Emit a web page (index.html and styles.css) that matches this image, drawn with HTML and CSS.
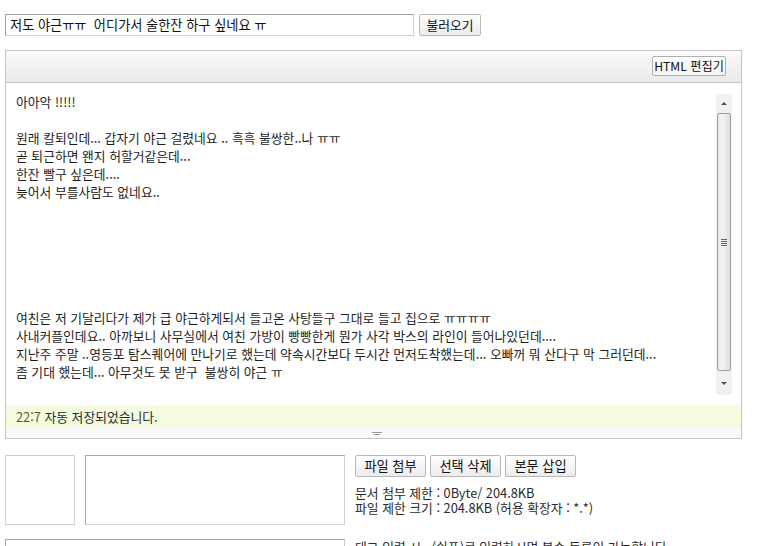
FILE: index.html
```html
<!DOCTYPE html>
<html lang="ko">
<head>
<meta charset="utf-8">
<title>글쓰기</title>
<link rel="stylesheet" href="styles.css">
</head>
<body>
<div class="page">
  <div class="title-row">
    <div class="title-input">저도 야근ㅠㅠ&nbsp; 어디가서 술한잔 하구 싶네요 ㅠ</div>
    <button class="btn btn-load">불러오기</button>
  </div>

  <div class="editor">
    <div class="toolbar">
      <button class="btn btn-html">HTML 편집기</button>
    </div>
    <div class="edit-area">
      <div class="edit-text">
        <p>아아악 !!!!!</p>
        <p>&nbsp;</p>
        <p>원래 칼퇴인데... 갑자기 야근 걸렸네요 .. 흑흑 불쌍한..나 ㅠㅠ</p>
        <p>곧 퇴근하면 왠지 허할거같은데...</p>
        <p>한잔 빨구 싶은데....</p>
        <p>늦어서 부를사람도 없네요..</p>
        <p>&nbsp;</p>
        <p>&nbsp;</p>
        <p>&nbsp;</p>
        <p>&nbsp;</p>
        <p>&nbsp;</p>
        <p>&nbsp;</p>
        <p>여친은 저 기달리다가 제가 급 야근하게되서 들고온 사탕들구 그대로 들고 집으로 ㅠㅠㅠㅠ</p>
        <p>사내커플인데요.. 아까보니 사무실에서 여친 가방이 빵빵한게 뭔가 사각 박스의 라인이 들어나있던데....</p>
        <p>지난주 주말 ..영등포 탐스퀘어에 만나기로 했는데 약속시간보다 두시간 먼저도착했는데... 오빠꺼 뭐 산다구 막 그러던데...</p>
        <p>좀 기대 했는데... 아무것도 못 받구&nbsp; 불쌍히 야근 ㅠ</p>
      </div>
      <div class="scrollbar">
        <div class="sb-btn"><span class="arrow-up"></span></div>
        <div class="sb-thumb"><span class="grip"><i></i><i></i><i></i><i></i></span></div>
        <div class="sb-btn"><span class="arrow-down"></span></div>
      </div>
    </div>
    <div class="status"><span class="time">22:7</span> 자동 저장되었습니다.</div>
    <div class="resize"><span class="resize-grip"><i></i><i></i></span></div>
  </div>

  <div class="attach">
    <div class="thumb-box"></div>
    <div class="file-list"></div>
    <div class="attach-side">
      <div class="attach-buttons">
        <button class="btn btn-file">파일 첨부</button>
        <button class="btn btn-file">선택 삭제</button>
        <button class="btn btn-file">본문 삽입</button>
      </div>
      <div class="attach-info">
        <div>문서 첨부 제한 : 0Byte/ 204.8KB</div>
        <div>파일 제한 크기 : 204.8KB (허용 확장자 : *.*)</div>
      </div>
    </div>
  </div>

  <div class="tags">
    <div class="tag-input"></div>
    <div class="tag-help">태그 입력 시 , (쉼표)로 입력하시면 복수 등록이 가능합니다.</div>
  </div>
</div>
</body>
</html>
```

FILE: styles.css
```css
html, body {
  margin: 0;
  padding: 0;
  background: #ffffff;
  overflow: hidden;
}
body {
  font-family: "Noto Sans CJK KR", "Noto Sans", sans-serif;
  font-size: 12.8px;
  color: #1e1e1e;
}
.page {
  padding: 14px 0 0 5px;
  width: 737px;
}
.title-row {
  display: flex;
  gap: 5px;
  height: 22px;
}
.title-input {
  box-sizing: border-box;
  width: 409px;
  height: 22px;
  border: 1px solid #a9a9a9;
  border-color: #a0a0a0 #d0d0d0 #d0d0d0 #a0a0a0;
  padding: 0 4px;
  line-height: 20px;
  font-size: 13.2px;
  color: #111;
  white-space: nowrap;
}
.btn {
  box-sizing: border-box;
  font-family: "Noto Sans CJK KR", "Noto Sans", sans-serif;
  font-size: 12.8px;
  color: #111;
  border: 1px solid #b8b8b8;
  border-radius: 2px;
  background: linear-gradient(#ffffff, #ececec);
  padding: 0;
  margin: 0;
  line-height: 1;
  cursor: pointer;
}
.btn-load {
  width: 62px;
  height: 22px;
}
.editor {
  margin-top: 14px;
  box-sizing: border-box;
  width: 737px;
  height: 389px;
  border: 1px solid #c4c4c4;
  display: flex;
  flex-direction: column;
}
.toolbar {
  box-sizing: border-box;
  height: 32px;
  border-bottom: 1px solid #c4c4c4;
  background: linear-gradient(#fafafa, #eaeaea);
  display: flex;
  justify-content: flex-end;
  align-items: flex-start;
  padding: 5px 15px 0 0;
}
.btn-html {
  width: 74px;
  height: 20px;
  font-size: 12.2px;
  background: linear-gradient(#ffffff, #f3f3f3);
  border-color: #b0b0b0;
}
.edit-area {
  height: 322px;
  display: flex;
  box-sizing: border-box;
  padding: 11px 9px 9px 10px;
}
.edit-text {
  flex: 1;
  line-height: 18px;
  color: #1e1e1e;
  margin-top: -1px;
}
.edit-text p {
  margin: 0;
  white-space: nowrap;
}
.scrollbar {
  width: 16px;
  height: 301px;
  display: flex;
  flex-direction: column;
  background: #f4f4f4;
}
.sb-btn {
  height: 19px;
  display: flex;
  align-items: center;
  justify-content: center;
  background: #f1f1f1;
}
.sb-btn:last-child {
  height: 24px;
}
.arrow-up {
  width: 0;
  height: 0;
  border-left: 3px solid transparent;
  border-right: 3px solid transparent;
  border-bottom: 3px solid #555;
}
.arrow-down {
  width: 0;
  height: 0;
  border-left: 3px solid transparent;
  border-right: 3px solid transparent;
  border-top: 3px solid #555;
}
.sb-thumb {
  flex: 1;
  box-sizing: border-box;
  margin: 0 1px;
  border: 1px solid #9e9e9e;
  border-radius: 2px;
  background: linear-gradient(90deg, #e8e8e8, #f4f4f4 40%, #dcdcdc);
  display: flex;
  align-items: center;
  justify-content: center;
}
.grip {
  display: flex;
  flex-direction: column;
  gap: 1px;
}
.grip i {
  display: block;
  width: 6px;
  height: 1px;
  background: #666;
}
.status {
  height: 23px;
  background: #f4fbdf;
  line-height: 23px;
  padding-left: 10px;
  color: #2a2a2a;
}
.time {
  color: #56621d;
}
.resize {
  height: 10px;
  background: #fafafa;
  display: flex;
  justify-content: center;
  align-items: center;
}
.resize-grip {
  display: flex;
  flex-direction: column;
  align-items: center;
  gap: 1px;
  padding-left: 6px;
}
.resize-grip i {
  display: block;
  height: 1px;
  background: #999;
}
.resize-grip i:first-child { width: 10px; }
.resize-grip i:last-child { width: 6px; }
.attach {
  margin-top: 16px;
  display: flex;
  align-items: flex-start;
}
.thumb-box {
  box-sizing: border-box;
  width: 70px;
  height: 70px;
  border: 1px solid #cfcfcf;
}
.file-list {
  box-sizing: border-box;
  width: 260px;
  height: 70px;
  margin-left: 10px;
  border: 1px solid #d0d0d0;
  border-top-color: #a8a8a8;
  border-left-color: #a8a8a8;
}
.attach-side {
  margin-left: 10px;
}
.attach-buttons {
  display: flex;
  gap: 4px;
}
.btn-file {
  width: 71px;
  height: 22px;
  font-size: 13.2px;
}
.attach-info {
  margin-top: 8px;
  line-height: 15px;
  color: #2a2a2a;
}
.tags {
  margin-top: 14px;
  display: flex;
  align-items: flex-start;
}
.tag-input {
  box-sizing: border-box;
  width: 340px;
  height: 22px;
  border: 1px solid #c8c8c8;
  border-top-color: #a8a8a8;
  border-left-color: #a8a8a8;
}
.tag-help {
  margin-left: 10px;
  line-height: 15px;
  color: #2a2a2a;
  white-space: nowrap;
}
```
